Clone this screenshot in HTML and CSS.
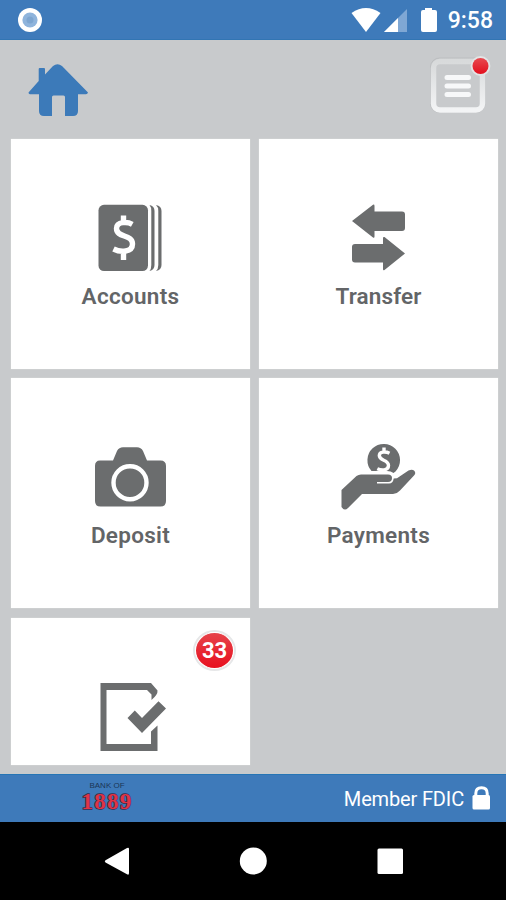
FILE: index.html
```html
<!DOCTYPE html>
<html lang="en">
<head>
<meta charset="utf-8">
<title>Mobile banking</title>
<link rel="stylesheet" href="styles.css">
</head>
<body>
<div class="phone">
  <div class="status">
    <svg class="status-left" width="32" height="40" viewBox="14 0 32 40"><circle cx="30" cy="20" r="12" fill="#fff"/><circle cx="30" cy="20" r="7.600" fill="#8fb4dc"/><circle cx="30" cy="20" r="3.500" fill="#7da5d0"/></svg>
    <svg class="status-icons" width="92" height="40" viewBox="350 0 92 40">
      <path d="M351.500 13Q366 3 380.500 13L366 32Z" fill="#fff"/>
      <path d="M407 9V32H384Z" fill="#7fa7d4"/><path d="M398 18V32H384Z" fill="#fff"/>
      <path d="M425 8H432V10H435Q437 10 437 12V30Q437 32 435 32H423Q421 32 421 30V12Q421 10 423 10H425Z" fill="#fff"/>
    </svg>
    <span class="clock">9:58</span>
  </div>
  <header class="header">
    <svg width="64" height="60" viewBox="26 60 64 60"><path d="M28.500 92.500L38.700 81V69Q38.700 68 39.700 68H44Q45 68 45 69V74.500L53 66Q57.500 62.500 62 66L88 92.500Q87.500 94.300 86 94.300H78V111Q78 116 73 116H65V97Q65 95.500 63.500 95.500H53.500Q52 95.500 52 97V116H44Q39 116 39 111V94.300H30Q28.500 94.300 28.500 92.500Z" fill="#3c7ab9"/></svg>
    <svg width="64" height="64" viewBox="427 54 64 64">
      <defs>
        <linearGradient id="frame" x1="0" y1="0" x2="0" y2="1"><stop offset="0" stop-color="#d8dadb"/><stop offset="1" stop-color="#f3f4f5"/></linearGradient>
        <linearGradient id="dot" x1="0" y1="0" x2="0" y2="1"><stop offset="0" stop-color="#e84a50"/><stop offset="1" stop-color="#e30f1d"/></linearGradient>
      </defs>
      <rect x="430.500" y="58" width="54.500" height="54.500" rx="9" fill="none" stroke="#bcbec0"/>
      <rect x="433.500" y="61.500" width="49" height="48.500" rx="6.500" fill="none" stroke="url(#frame)" stroke-width="5.500"/>
      <path d="M447 77.500H468.500M447 86H468.500M447 94.500H468.500" stroke="#f7f8f9" stroke-width="5" stroke-linecap="round"/>
      <circle cx="480.500" cy="66" r="9.900" fill="#e3e4e5"/><circle cx="480.500" cy="66" r="8" fill="url(#dot)"/>
    </svg>
  </header>
  <main class="grid">
    <section class="tile">
      <svg class="glyph" width="120" height="90" viewBox="71 190 120 90">
        <rect x="98.500" y="204.800" width="49.500" height="66.200" rx="5.500"/>
        <path d="M149.500 205Q154.500 206 154.500 211V265Q154.500 270 149.500 271Q151.300 269 151.300 265V211Q151.300 207 149.500 205ZM156 205Q161.500 206 161.500 211V265Q161.500 270 156 271Q158.300 269 158.300 265V211Q158.300 207 156 205Z"/>
        <path class="cut" d="M132.300 224.300C128 221.900 116.500 221 116.500 228.500C116.500 238 132.500 234 132.500 244C132.500 252.500 120.500 252.500 113.500 249M123.500 215.500V221M123.500 253V260" stroke-width="5.400"/>
      </svg>
      <h2 class="label accounts">Accounts</h2>
    </section>
    <section class="tile">
      <svg class="glyph" width="120" height="90" viewBox="319 190 120 90">
        <path d="M352 221L373 204.700Q374.500 204.200 374.500 206V211.500H402Q405 211.500 405 214.500V228Q405 231 402 231H374.500V236.500Q374.500 238.300 373 237.500ZM405 253.500L384.500 237Q383 236.500 383 238V244H355Q352 244 352 247V259.500Q352 262.500 355 262.500H383V269Q383 271 384.500 270Z"/>
      </svg>
      <h2 class="label transfer">Transfer</h2>
    </section>
    <section class="tile">
      <svg class="glyph" width="120" height="90" viewBox="71 429 120 90">
        <path d="M100 460.500H113L117 451Q119 447.300 123 447.300H137Q141 447.300 143 451L147 460.500H160.500Q166 460.500 166 466V501Q166 506.500 160.500 506.500H100.500Q95 506.500 95 501V466Q95 460.500 100 460.500Z"/>
        <circle class="cut" cx="130" cy="482.700" r="16.500" stroke-width="4.400"/>
      </svg>
      <h2 class="label deposit">Deposit</h2>
    </section>
    <section class="tile">
      <svg class="glyph" width="120" height="90" viewBox="319 429 120 90">
        <path d="M371.500 471A16.300 16.300 0 1 1 395.500 471.500L393.500 473Q391 471 387 471Z"/>
        <path class="cut" d="M389.500 453.200C386 451.500 379.300 451.200 379.300 455.600C379.300 461.200 388.500 459.200 388.500 465.500C388.500 471 381 470.500 377.300 468.700M384 447.500V452M384 469V473" stroke-width="3.400"/>
        <path d="M341.500 490L356.500 476Q358.500 474.500 361 474.500H388Q392 474.500 392 478Q392 482 388 482H377V483.500H389Q393 483.500 393.700 478.500L397 478.300L408.500 470.600Q412 469 414 470.500Q416.500 473 414 475.500L400 490.500Q397.500 493.500 393 494H362L348 508Q344.500 511.500 341.500 507Z"/>
      </svg>
      <h2 class="label payments">Payments</h2>
    </section>
    <section class="tile">
      <svg class="glyph" width="120" height="90" viewBox="71 668.500 120 90">
        <path d="M100.500 682.500H151L157.500 690Q158 694 151.500 699.500V694L147 689.500H106.500V743.500H151V731L157.500 725V750.500H100.500Z"/>
        <path d="M127.500 717.500L134.800 710L142 717.500L158.500 700.700L166 708L142 732.500Z"/>
      </svg>
      <span class="count">33</span>
    </section>
  </main>
  <footer class="footer">
    <div class="brand"><small>BANK OF</small><b>1889</b></div>
    <div class="fdic"><span>Member FDIC</span>
      <svg width="20" height="26" viewBox="471 785.500 20 26"><path d="M475.800 796V793Q475.800 787.300 481.500 787.300Q487.200 787.300 487.200 793V796" fill="none" stroke="#fff" stroke-width="3"/><rect x="472.500" y="794.500" width="17.500" height="14.500" rx="1.500" fill="#fff"/></svg>
    </div>
  </footer>
  <nav class="nav">
    <svg width="506" height="78" viewBox="0 822 506 78" fill="#fff"><path d="M105.500 860.300L127 848Q129 847 129 849V873Q129 875.500 127 874.300L105.500 862.500Q104 861.400 105.500 860.300Z"/><circle cx="253.300" cy="861" r="13.500"/><rect x="377.500" y="848.500" width="25.500" height="25.500" rx="1.500"/></svg>
  </nav>
</div>
</body>
</html>
```
FILE: styles.css
```css
* { box-sizing: border-box; }
body { margin: 0; font-family: Roboto, "Liberation Sans", sans-serif; }
svg { display: block; flex: none; }
.phone { width: 506px; height: 900px; display: flex; flex-direction: column; overflow: hidden; background: #c8cacc; }
.status { height: 40px; flex: none; display: flex; align-items: center; background: #3e7aba; border-bottom: 1px solid #3275b3; padding: 0 13px 0 14px; color: #fff; }
.status-icons { margin-left: auto; margin-right: 1px; }
.clock { width: 50px; text-align: right; font-size: 23px; font-weight: 500; line-height: 40px; padding-top: 2px; white-space: nowrap; }
.header { height: 99px; flex: none; display: flex; justify-content: space-between; padding: 20px 15px 0 26px; }
.header svg + svg { margin-top: -6px; }
.grid { height: 635px; flex: none; display: grid; grid-template-columns: 239px 239px; grid-template-rows: 229.500px 230px 147px; gap: 9.500px 9px; padding-left: 11px; }
.tile { position: relative; background: #fff; box-shadow: 0 0 1px #e4e6e8; display: flex; flex-direction: column; align-items: center; padding-top: 51px; }
.glyph { fill: #6b6d6e; }
.cut { fill: none; stroke: #fff; }
.label { margin: 2px 0 0; font-size: 22.500px; font-weight: 600; line-height: 28px; letter-spacing: .3px; color: #636567; }
.transfer { letter-spacing: .15px; }
.count { position: absolute; top: 14px; right: 16px; width: 39px; height: 37px; border-radius: 50%; background: linear-gradient(#e6434a, #e8101f); border: 1px solid #fff; box-shadow: 0 0 0 2px #e6e7e8; color: #fff; font-size: 22px; font-weight: 700; line-height: 36px; text-align: center; }
.footer { height: 48px; flex: none; display: flex; justify-content: space-between; background: #3e7aba; border-top: 1px solid #2675b5; padding: 0 15px 0 80px; color: #fff; }
.brand { width: 54px; display: flex; flex-direction: column; align-items: center; gap: 3px; padding-top: 7px; }
.brand small { font: 8px/8px "Liberation Sans", sans-serif; color: #1b3656; white-space: nowrap; }
.brand b { font: bold 23px/18px "Liberation Serif", serif; height: 18px; letter-spacing: 1.3px; color: #df3446; -webkit-text-stroke: 1.4px #38294a; paint-order: stroke fill; }
.fdic { display: flex; align-items: center; gap: 7px; font-size: 20px; letter-spacing: -.15px; }
.nav { height: 78px; flex: none; background: #000; }
```
